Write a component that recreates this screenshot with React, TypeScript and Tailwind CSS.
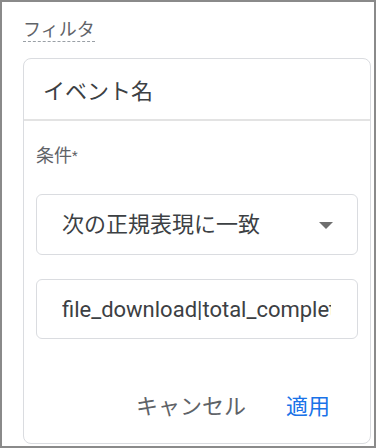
import React from 'react';

const font = { fontFamily: 'Roboto, "Noto Sans CJK JP", sans-serif' };

const App: React.FC = () => {
  return (
    <div
      className="w-[376px] h-[448px] box-border border-2 border-[#8a8a8a] bg-white overflow-hidden"
      style={font}
    >
      {/* Filter label */}
      <div className="pl-[21px] pt-[17px]">
        <span className="inline-block text-[18px] leading-[22px] text-[#5f6368] border-b border-dashed border-[#9aa0a6]">
          フィルタ
        </span>
      </div>

      {/* Card */}
      <div className="ml-[21px] mt-[15px] w-[348px] border border-[#dadce0] rounded-lg bg-white">
        <div className="h-[62px] flex items-center pl-[19px] pt-[4px] border-b-2 border-[#e3e3e3] text-[22px] text-[#3c4043]">
          イベント名
        </div>

        <div className="px-[12px] pt-[23px] pb-[15px]">
          <div className="text-[18px] leading-[24px] text-[#5f6368]">
            条件<span className="text-[13px] align-top">*</span>
          </div>

          <div className="mt-[26px] h-[61px] flex items-center justify-between pl-[25px] pr-[24px] border border-[#dadce0] rounded-md text-[22px] text-[#3c4043]">
            <span>次の正規表現に一致</span>
            <svg width="14" height="8" viewBox="0 0 14 8" className="mt-[2px]">
              <path d="M0 0 L14 0 L7 7 Z" fill="#6f6f6f" />
            </svg>
          </div>

          <div className="mt-[24px] h-[60px] flex items-center pl-[25px] pr-[26px] border border-[#dadce0] rounded-md">
            <div className="overflow-hidden whitespace-nowrap text-[22px] text-[#3c4043] w-full">
              file_download|total_completion
            </div>
          </div>

          <div className="mt-[45px] h-[44px] flex items-center justify-end gap-[40px] pr-[28px] text-[22px]">
            <span className="text-[#5f6368]">キャンセル</span>
            <span className="text-[#1a73e8]">適用</span>
          </div>
        </div>
      </div>
    </div>
  );
};

export default App;
